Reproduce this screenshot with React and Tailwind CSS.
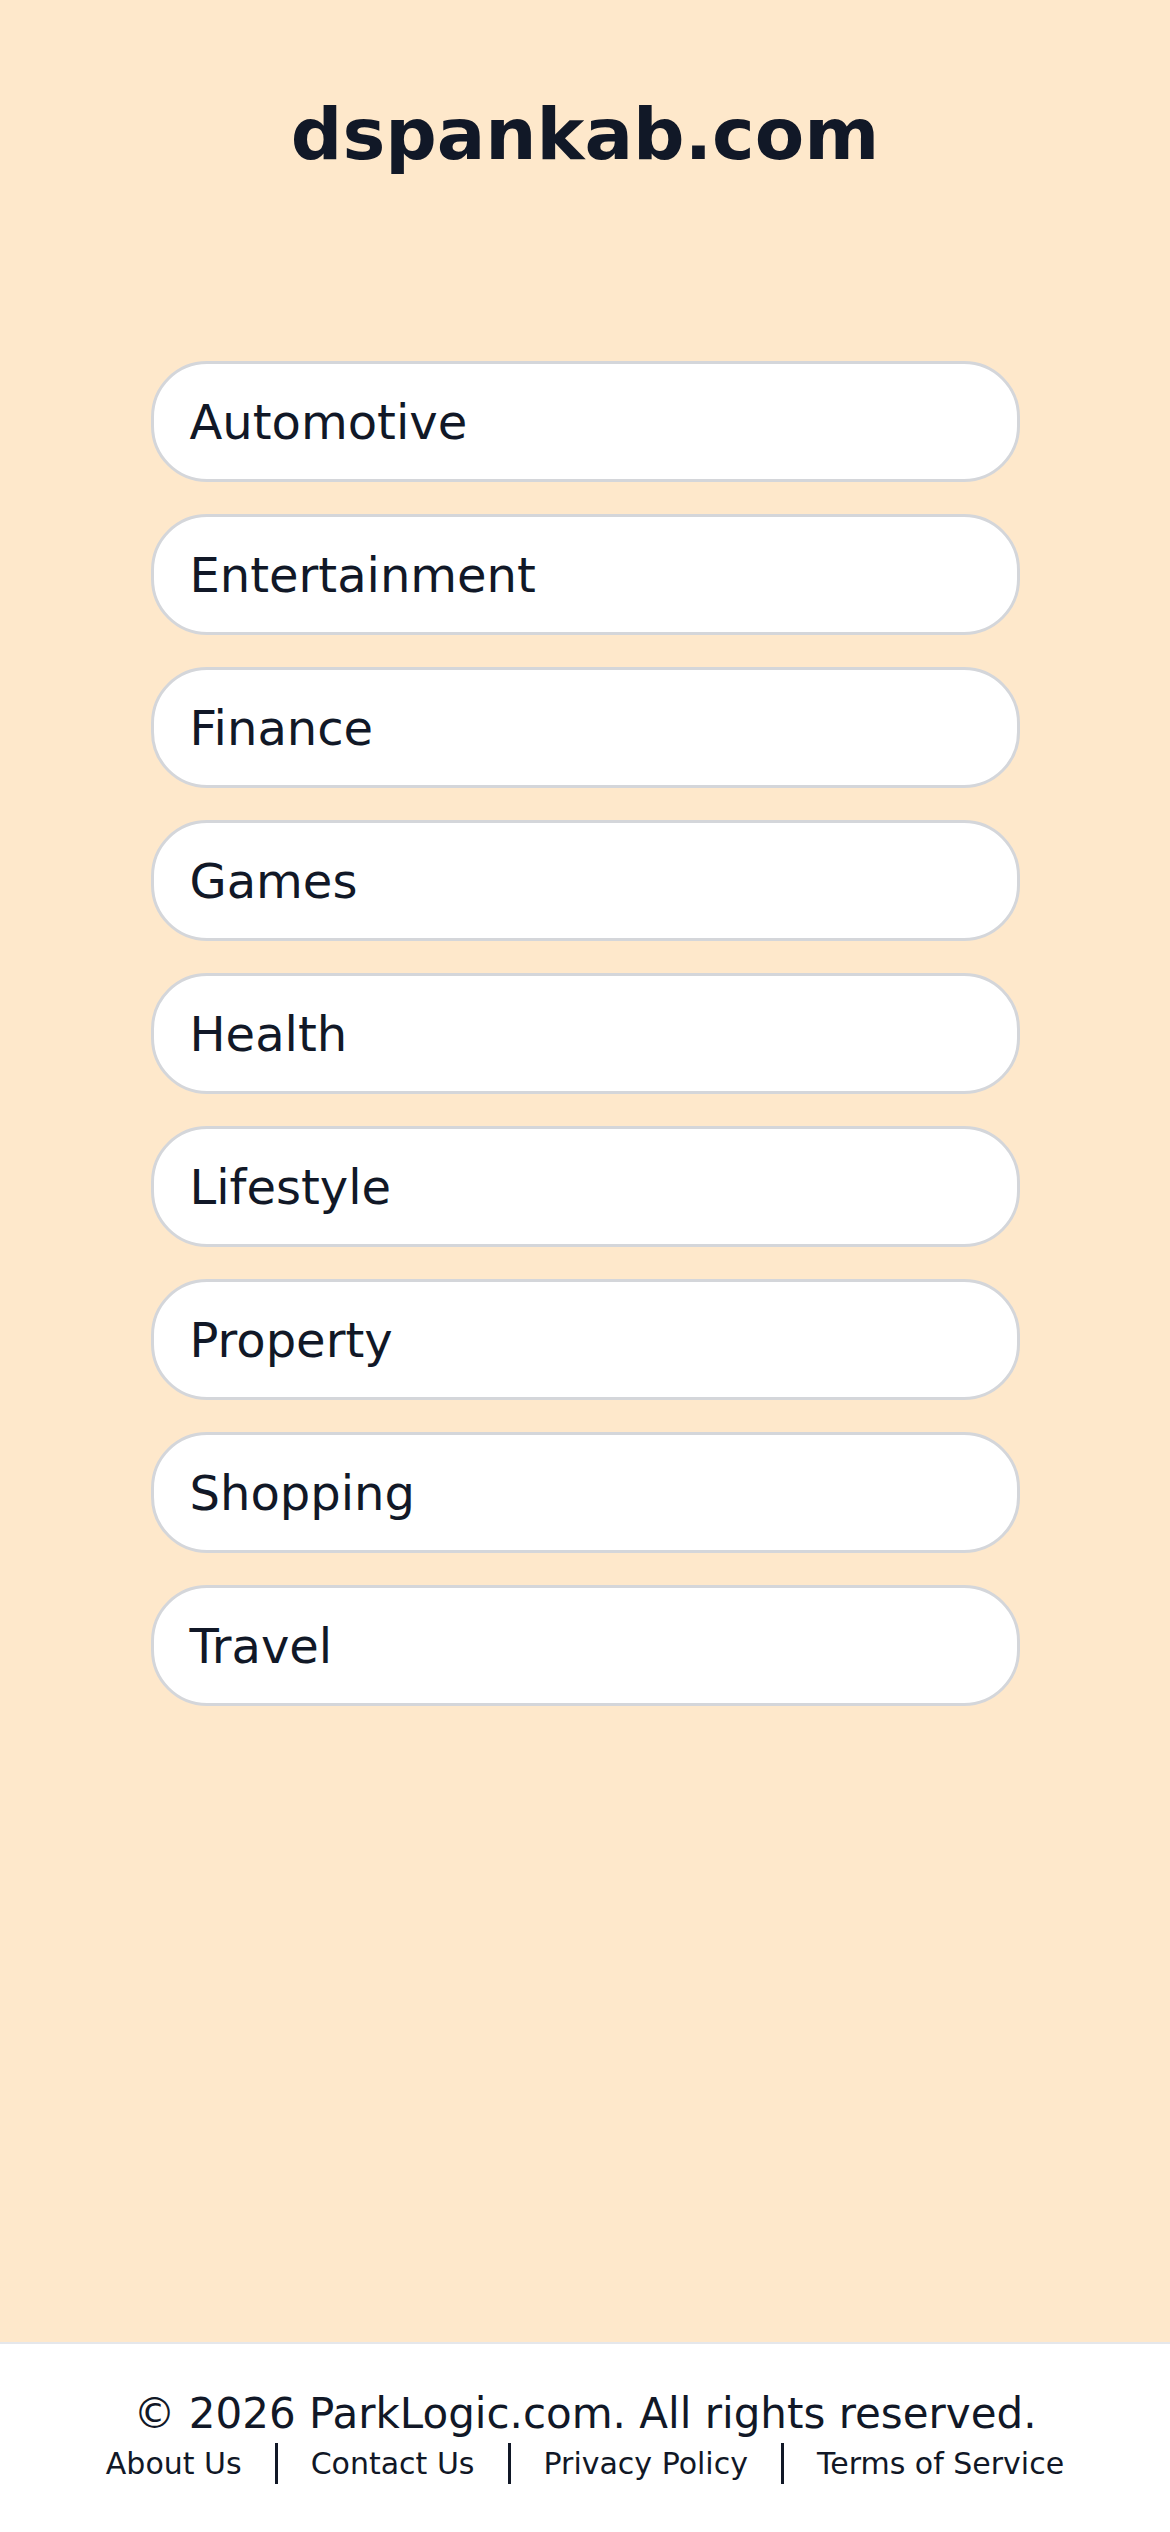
import React from "react";

const categories = [
  "Automotive",
  "Entertainment",
  "Finance",
  "Games",
  "Health",
  "Lifestyle",
  "Property",
  "Shopping",
  "Travel",
];

const footerLinks = ["About Us", "Contact Us", "Privacy Policy", "Terms of Service"];

const App = () => {
  return (
    <div
      className="flex flex-col min-h-screen bg-[#fee8cb] text-[#111827]"
      style={{ fontFamily: '"DejaVu Sans", Verdana, sans-serif' }}
    >
      {/* header + category list */}
      <main className="flex-1 pt-[98px]">
        <h1 className="text-center text-[72px] leading-[72px] font-bold">dspankab.com</h1>

        <nav className="mt-[191px] mx-auto w-[869px] flex flex-col gap-[32px]">
          {categories.map((name) => (
            <a
              key={name}
              href="#"
              className="flex items-center h-[121px] pl-9 bg-white border-[3px] border-[#d4d6da] rounded-[56px] text-[48px] leading-none"
            >
              {name}
            </a>
          ))}
        </nav>
      </main>

      {/* footer */}
      <footer className="bg-white border-t-2 border-[#e5e7eb] pt-[46px] pb-[48px] text-center">
        <p className="text-[42px] leading-[48px]">© 2026 ParkLogic.com. All rights reserved.</p>
        <div className="mt-[5px] flex justify-center items-center gap-[33px]">
          {footerLinks.map((link, i) => (
            <React.Fragment key={link}>
              {i > 0 && <span className="w-[3px] h-[41px] bg-[#111827]"></span>}
              <a href="#" className="text-[30px] leading-[41px]">
                {link}
              </a>
            </React.Fragment>
          ))}
        </div>
      </footer>
    </div>
  );
};

export default App;
